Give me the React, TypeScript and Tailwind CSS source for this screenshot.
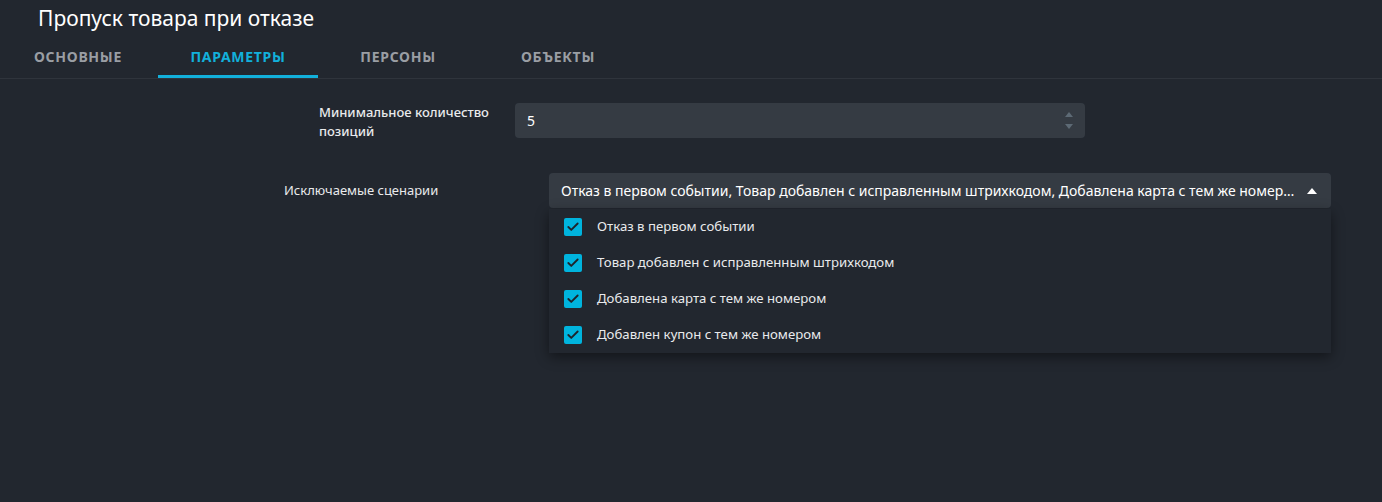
import { Check } from 'lucide-react';

const tabs = ['Основные', 'Параметры', 'Персоны', 'Объекты'];

const scenarios = [
  'Отказ в первом событии',
  'Товар добавлен с исправленным штрихкодом',
  'Добавлена карта с тем же номером',
  'Добавлен купон с тем же номером',
];

export default function App() {
  const active = 1;

  return (
    <div className="w-[1382px] h-[502px] bg-[#22272f] text-white font-['Noto_Sans',sans-serif] overflow-hidden">
      {/* Header */}
      <div className="pl-[38px] pt-[4px] h-[38px] text-[21px] leading-[28px]">Пропуск товара при отказе</div>

      {/* Tabs */}
      <div className="flex border-b border-[#2f343c] -ml-[2px] h-[41px]">
        {tabs.map((t, i) => (
          <div
            key={t}
            className={`w-[160px] flex items-center justify-center text-[14px] font-bold uppercase tracking-[0.7px] border-b-[3px] ${
              i === active ? 'text-[#12b0db] border-[#12b0db]' : 'text-[#9a9ea4] border-transparent'
            }`}
          >
            {t}
          </div>
        ))}
      </div>

      {/* Min count */}
      <div className="flex items-start pl-[319px] pt-[24px]">
        <div className="w-[196px] text-[13px] leading-[19px] font-medium text-[#e9eaec] pr-4">
          Минимальное количество позиций
        </div>
        <div className="w-[570px] h-[35px] bg-[#353b43] rounded-[4px] flex items-center pl-[12px] pr-[12px] text-[14px]">
          <span className="flex-1">5</span>
          <div className="flex flex-col gap-[7px] items-center">
            <svg width="8" height="5" viewBox="0 0 8 5"><path d="M0 5 L4 0 L8 5 Z" fill="#5d6a75" /></svg>
            <svg width="8" height="5" viewBox="0 0 8 5"><path d="M0 0 L4 5 L8 0 Z" fill="#5d6a75" /></svg>
          </div>
        </div>
      </div>

      {/* Excluded scenarios */}
      <div className="flex items-start pl-[284px] pt-[32px]">
        <div className="w-[265px] h-[35px] flex items-center text-[13px] text-[#e9eaec]">Исключаемые сценарии</div>
        <div className="relative w-[782px]">
          <div className="h-[35px] bg-[#353b43] rounded-[4px] flex items-center pl-[12px] pr-[14px] text-[14px]">
            <span className="flex-1 min-w-0 truncate pr-[12px]">
              Отказ в первом событии, Товар добавлен с исправленным штрихкодом, Добавлена карта с тем же номером, Добавлен купон с тем же номером
            </span>
            <svg width="10" height="6" viewBox="0 0 10 6"><path d="M0 6 L5 0 L10 6 Z" fill="#ffffff" /></svg>
          </div>
          <div className="absolute left-0 right-0 top-[36px] bg-[#22272f] shadow-[0_4px_12px_rgba(0,0,0,0.45)] z-10">
            {scenarios.map((s) => (
              <div key={s} className="h-[36px] flex items-center pl-[15px] text-[13.2px] text-[#e9eaec]">
                <span className="w-[18px] h-[18px] rounded-[2px] bg-[#00b4de] flex items-center justify-center mr-[15px]">
                  <Check size={14} strokeWidth={3.2} color="#1e232a" />
                </span>
                {s}
              </div>
            ))}
          </div>
        </div>
      </div>
    </div>
  );
}
